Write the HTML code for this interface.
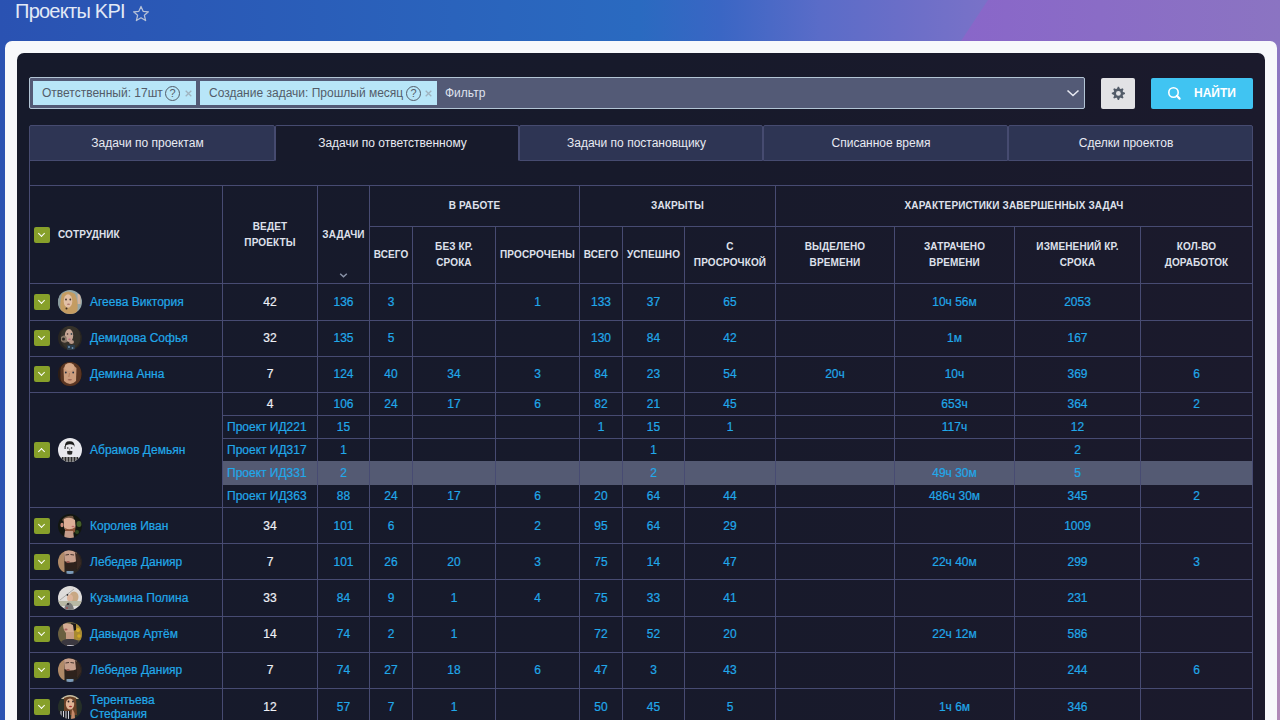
<!DOCTYPE html>
<html><head><meta charset="utf-8">
<style>
*{box-sizing:border-box;margin:0;padding:0}
html,body{width:1280px;height:720px;overflow:hidden}
body{font-family:"Liberation Sans",sans-serif;position:relative;
background:linear-gradient(90deg,#2a52b2 0px,#2a6ac0 640px,#3a66c4 720px,#5a6cc8 820px,#6a6ec8 900px,#7a72c8 990px)}
.purp{position:absolute;left:0;top:0;width:1280px;height:720px;clip-path:polygon(988px 0,1280px 0,1280px 720px,514px 720px);background:linear-gradient(90deg,#8966c9 960px,#8a6cc6 1100px,#8b74c2 1280px)}
.rstrip{position:absolute;left:1270px;top:41px;width:10px;height:679px;background:linear-gradient(180deg,#8b76c2 0,#a184bc 300px,#b08ab8 679px)}
.title{position:absolute;left:15px;top:-1px;font-size:20px;color:#e2e9f6;letter-spacing:-0.75px;line-height:24px}
.star{position:absolute;left:132px;top:5px}
.white{position:absolute;left:5px;top:41px;width:1272px;height:720px;background:#f7f8fb;border-radius:7px}
.dark{position:absolute;left:17px;top:53px;width:1248px;height:700px;background:linear-gradient(90deg,#161a2b 0,#171a2b 600px,#1b1a2c 1248px);border-radius:7px}
.filter{position:absolute;left:29px;top:77px;width:1056px;height:32px;background:#535a76;border:1px solid #b3c5d5;border-radius:2px}
.chip{position:absolute;top:3px;height:24px;background:#b8e6f8;color:#535c69;font-size:12px;line-height:24px;white-space:nowrap}
.chip .t{position:absolute;top:0}
.help{position:absolute;top:5px;width:15px;height:15px;border:1px solid #535c69;border-radius:50%;font-size:11px;line-height:13px;text-align:center;color:#535c69}
.x{position:absolute;top:0;font-size:12px;color:#9aa2ad}
.ph{position:absolute;left:415px;top:0;line-height:30px;font-size:12px;color:#dfe2ee}
.chev{position:absolute;left:1036px;top:8px}
.gear{position:absolute;left:1101px;top:78px;width:34px;height:31px;background:#e2e2e5;border-radius:2px}
.find{position:absolute;left:1151px;top:78px;width:102px;height:31px;background:#40c4f2;border-radius:2px;color:#fff;font-weight:bold;font-size:12px;line-height:31px}
.tabs{position:absolute;left:29px;top:125px;width:1224px;height:36px}
.tab{position:absolute;top:0;height:36px;background:#2e3554;border:1px solid #464b70;border-radius:2px 2px 0 0;color:#e8eaf2;font-size:12px;text-align:center;line-height:34px;padding-right:9px}
.tab.act{background:#171a2b;border-bottom-color:#171a2b}
.hl{position:absolute;height:1px}
.vl{position:absolute;width:1px}
.n,.h,.nm{position:absolute;display:flex;align-items:center;justify-content:center;white-space:nowrap}
.n{font-size:12px;-webkit-text-stroke:0.2px currentColor}
.h{font-size:10px;font-weight:bold;color:#dfe1eb;text-align:center;line-height:16px;letter-spacing:0.12px}
.nm{font-size:12px;color:#21a8e9;line-height:14px;-webkit-text-stroke:0.2px currentColor}
.cbx{position:absolute;width:16px;height:16px;background:#87a02a;border-radius:2px}
.cbx:after{content:"";position:absolute;left:5px;top:4px;width:4px;height:4px;border-right:1.5px solid #fff;border-bottom:1.5px solid #fff;transform:rotate(45deg)}
.cbx.up:after{top:7px;transform:rotate(-135deg)}
.av{position:absolute}
</style></head><body>
<svg width="0" height="0" style="position:absolute">
<defs>
<clipPath id="cc"><circle cx="12" cy="12" r="12"/></clipPath>
<filter id="bl" x="-10%" y="-10%" width="120%" height="120%"><feGaussianBlur stdDeviation="0.55"/></filter>
<symbol id="av1" viewBox="0 0 24 24"><g clip-path="url(#cc)"><rect width="24" height="24" fill="#95a6a6"/><g filter="url(#bl)"><rect x="0" y="0" width="6" height="24" fill="#8a9c9e"/><rect x="19.5" y="4" width="3" height="10" fill="#d6b6a0"/><path d="M4 4 Q10 -1 17 4 Q21 12 19 24 L3 24 Q1 14 4 4Z" fill="#c49c62"/><ellipse cx="10" cy="11" rx="4.3" ry="6.8" fill="#e2c0a6"/><circle cx="8" cy="9.5" r="0.9" fill="#403028"/><circle cx="12.3" cy="9.5" r="0.9" fill="#403028"/><ellipse cx="10.5" cy="14.3" rx="1.6" ry="0.7" fill="#b07870"/><circle cx="8.5" cy="18.5" r="1" fill="#3a2a20"/></g></g></symbol>
<symbol id="av2" viewBox="0 0 24 24"><g clip-path="url(#cc)"><rect width="24" height="24" fill="#272522"/><g filter="url(#bl)"><ellipse cx="12.5" cy="11" rx="10" ry="12" fill="#35302b"/><ellipse cx="11" cy="9.5" rx="4.2" ry="6.5" fill="#c6a694"/><path d="M3 11 Q6 8 8.5 11 L9 16 Q6 18 3 15Z" fill="#8a7a6a"/><circle cx="5.5" cy="13" r="1.5" fill="#2a2622"/><ellipse cx="13.5" cy="16" rx="2.5" ry="2" fill="#b89888"/><circle cx="9.5" cy="8" r="0.8" fill="#3a2a2a"/><circle cx="13.5" cy="8" r="0.9" fill="#3a4a50"/><ellipse cx="11.5" cy="13.2" rx="1.4" ry="0.8" fill="#c06a80"/><rect x="9" y="19" width="8" height="5" fill="#2c3a4a"/><circle cx="11" cy="21" r="1" fill="#6a90b0"/><circle cx="14.5" cy="22" r="0.9" fill="#6a90b0"/></g></g></symbol>
<symbol id="av3" viewBox="0 0 24 24"><g clip-path="url(#cc)"><rect width="24" height="24" fill="#2a1a12"/><g filter="url(#bl)"><ellipse cx="12.5" cy="12" rx="11" ry="13" fill="#5a3622"/><path d="M5.5 6 Q12 -1 18.5 6 L18 19 Q12 25 6 19Z" fill="#cc9c7c"/><ellipse cx="11.5" cy="5" rx="5" ry="4" fill="#d6a888"/><circle cx="7.8" cy="10.5" r="0.9" fill="#2a3040"/><circle cx="15.2" cy="10.5" r="0.9" fill="#2a3040"/><path d="M11.5 11 L10.8 15" stroke="#a87050" stroke-width="0.7"/><ellipse cx="11.8" cy="17.8" rx="2.2" ry="0.8" fill="#9a6050"/><rect x="0" y="0" width="2.5" height="24" fill="#2a1a12"/></g></g></symbol>
<symbol id="av4" viewBox="0 0 24 24"><g clip-path="url(#cc)"><rect width="24" height="24" fill="#e9e9ee"/><g filter="url(#bl)"><path d="M7 9 Q6.5 3 11.5 3.3 Q17 3 16.5 9 L15.5 7 Q12 5.5 8.5 7Z" fill="#1e1e1e"/><rect x="6.5" y="8" width="1.2" height="3" fill="#333"/><circle cx="9.8" cy="10" r="0.8" fill="#222"/><circle cx="13.6" cy="10" r="0.8" fill="#222"/><path d="M11.6 10.5 L11.3 12.5" stroke="#555" stroke-width="0.6"/><path d="M9 13.2 Q12 12.3 14.5 13.2 L14 16.3 Q12 17.2 9.5 16.3Z" fill="#2a2a2a"/><path d="M2 24 L4 19 L20 19 L22 24Z" fill="#2a2a2a"/><path d="M6 19v5M9 19v5M12 19v5M15 19v5M18 19v5" stroke="#e0e0e0" stroke-width="0.9"/></g></g></symbol>
<symbol id="av5" viewBox="0 0 24 24"><g clip-path="url(#cc)"><rect width="24" height="24" fill="#121610"/><g filter="url(#bl)"><ellipse cx="21" cy="10" rx="2.5" ry="3" fill="#44602a"/><ellipse cx="19" cy="18" rx="2" ry="2" fill="#304820"/><path d="M4 6 Q8 1 15 2 L16 5 Q10 4 6 8Z" fill="#6e5442"/><path d="M6 5 Q12 2 17 6 L17.5 12 Q17 17 13 18 L8 17 Q5 14 6 5Z" fill="#dcae96"/><ellipse cx="4" cy="11" rx="1.6" ry="2.2" fill="#c88c7c"/><path d="M7 14 Q12 17 17.5 13 L17 18 Q12 21 7.5 17Z" fill="#8c5238"/><path d="M7 17 L15 17 L16 24 L6 24Z" fill="#c49c8a"/><ellipse cx="15" cy="12.5" rx="1.5" ry="0.8" fill="#c07070"/></g></g></symbol>
<symbol id="av6" viewBox="0 0 24 24"><g clip-path="url(#cc)"><rect width="24" height="24" fill="#2a2420"/><g filter="url(#bl)"><rect x="0" y="2" width="6.5" height="20" fill="#b08a68"/><path d="M6 1 Q13 -1 19 3 L19 14 Q13 17 7 14Z" fill="#c8a08c"/><path d="M17 2 Q23 6 23 14 L19 20 Z" fill="#3a2c24"/><path d="M6.5 11 Q12 14 19 11 L19 18 Q13 22 7 18Z" fill="#2e221c"/><ellipse cx="10" cy="12" rx="1.8" ry="1" fill="#9a5a50"/><path d="M7.5 5 L11 4.5 M12.5 4.5 L16 5" stroke="#3a2a24" stroke-width="0.9"/><rect x="8.5" y="21" width="7" height="3" fill="#7a9ab8"/></g></g></symbol>
<symbol id="av7" viewBox="0 0 24 24"><g clip-path="url(#cc)"><rect width="24" height="24" fill="#dedcda"/><g filter="url(#bl)"><path d="M2 14 L16 3" stroke="#8a8884" stroke-width="0.6"/><circle cx="9.5" cy="9" r="0.9" fill="#222"/><ellipse cx="16" cy="11" rx="4.5" ry="5.5" fill="#c8a884"/><ellipse cx="12" cy="12" rx="3" ry="3.5" fill="#dcb49a"/><rect x="0" y="15" width="24" height="5" fill="#b8b8a4"/><path d="M6 24 Q7 17 11 16.5 Q15 17 16 24Z" fill="#7a7a7a"/><circle cx="10" cy="18" r="1" fill="#222"/><circle cx="9" cy="22" r="1" fill="#a05050"/></g></g></symbol>
<symbol id="av8" viewBox="0 0 24 24"><g clip-path="url(#cc)"><rect width="24" height="24" fill="#6a6040"/><g filter="url(#bl)"><rect x="16" y="2" width="8" height="16" fill="#a88a30"/><circle cx="20" cy="8" r="2" fill="#d8b030"/><circle cx="21" cy="14" r="1.8" fill="#d0a828"/><path d="M13 1 L18 2 L18 8 L15 9Z" fill="#1a1818"/><path d="M5 2 Q10 0 15 3 L16 10 Q13 13 8 11 Q5 8 5 2Z" fill="#d4ac94"/><rect x="8" y="10" width="8" height="7" fill="#c49a82"/><ellipse cx="8" cy="7.5" rx="1.6" ry="0.9" fill="#a86060"/><path d="M1 24 Q3 16 12 17 Q21 16 23 24Z" fill="#3a3840"/><rect x="9" y="23" width="7" height="1" fill="#c8c8d8"/></g></g></symbol>
<symbol id="av9" viewBox="0 0 24 24"><g clip-path="url(#cc)"><rect width="24" height="24" fill="#263028"/><g filter="url(#bl)"><rect x="3" y="0" width="18" height="4" fill="#c8bca0"/><path d="M6 3 Q12 0 18 3 L19 20 L6 20Z" fill="#6a4228"/><ellipse cx="12" cy="9" rx="4.2" ry="5.5" fill="#e0b494"/><circle cx="10.5" cy="6.5" r="0.9" fill="#2a2020"/><circle cx="15" cy="6.5" r="0.9" fill="#2a2020"/><ellipse cx="12.5" cy="11.5" rx="1.5" ry="0.7" fill="#a83030"/><rect x="1" y="16" width="11" height="8" fill="#1e1e24"/><path d="M3 16v8M5.5 16v8M8 16v8M10.5 16v8" stroke="#d8d8e0" stroke-width="1"/><path d="M14 14 Q17 16 17 24 L13 24Z" fill="#c48a6a"/></g></g></symbol>
</defs></svg>
<div class="purp"></div>
<div class="rstrip"></div>
<div class="title">Проекты KPI</div>
<svg class="star" width="18" height="17" viewBox="0 0 16 15"><path d="M8 1.2 L9.9 5.6 L14.6 6 L11 9.1 L12.1 13.8 L8 11.3 L3.9 13.8 L5 9.1 L1.4 6 L6.1 5.6 Z" fill="none" stroke="#b7c2d8" stroke-width="1.1" stroke-linejoin="round"/></svg>
<div class="white"></div>
<div class="dark"></div>
<div class="filter">
  <div class="chip" style="left:3px;width:163px"><span class="t" style="left:9px">Ответственный: 17шт</span><span class="help" style="left:132px">?</span><svg class="x" style="left:152px;top:9px" width="7" height="7" viewBox="0 0 7 7"><path d="M0.7 0.7L6.3 6.3M6.3 0.7L0.7 6.3" stroke="#9fb3bf" stroke-width="1.3"/></svg></div>
  <div class="chip" style="left:170px;width:237px"><span class="t" style="left:9px">Создание задачи: Прошлый месяц</span><span class="help" style="left:206px">?</span><svg class="x" style="left:225px;top:9px" width="7" height="7" viewBox="0 0 7 7"><path d="M0.7 0.7L6.3 6.3M6.3 0.7L0.7 6.3" stroke="#9fb3bf" stroke-width="1.3"/></svg></div>
  <div class="ph">Фильтр</div>
  <svg class="chev" width="14" height="14" viewBox="0 0 14 14"><path d="M1.5 4.5 L7 9.5 L12.5 4.5" fill="none" stroke="#e8eaf2" stroke-width="1.6"/></svg>
</div>
<div class="gear"><svg style="position:absolute;left:10px;top:8px" width="15" height="15" viewBox="0 0 15 15"><g transform="translate(7.4 7.4)" fill="#535c69"><circle r="4.8"/><path d="M-1.6 -4.2 L-0.6 -6.6 L0.6 -6.6 L1.6 -4.2Z" transform="rotate(0)"/><path d="M-1.6 -4.2 L-0.6 -6.6 L0.6 -6.6 L1.6 -4.2Z" transform="rotate(45)"/><path d="M-1.6 -4.2 L-0.6 -6.6 L0.6 -6.6 L1.6 -4.2Z" transform="rotate(90)"/><path d="M-1.6 -4.2 L-0.6 -6.6 L0.6 -6.6 L1.6 -4.2Z" transform="rotate(135)"/><path d="M-1.6 -4.2 L-0.6 -6.6 L0.6 -6.6 L1.6 -4.2Z" transform="rotate(180)"/><path d="M-1.6 -4.2 L-0.6 -6.6 L0.6 -6.6 L1.6 -4.2Z" transform="rotate(225)"/><path d="M-1.6 -4.2 L-0.6 -6.6 L0.6 -6.6 L1.6 -4.2Z" transform="rotate(270)"/><path d="M-1.6 -4.2 L-0.6 -6.6 L0.6 -6.6 L1.6 -4.2Z" transform="rotate(315)"/><circle r="2.4" fill="#e2e2e5"/></g></svg></div>
<div class="find"><svg style="position:absolute;left:15px;top:7px" width="16" height="16" viewBox="0 0 16 16"><circle cx="7.5" cy="7.5" r="4.7" fill="none" stroke="#fff" stroke-width="1.6"/><path d="M10.8 10.8 L13.6 13.6" stroke="#fff" stroke-width="2.2" stroke-linecap="round"/></svg><span style="position:absolute;left:43px;top:0">НАЙТИ</span></div>
<div class="tabs">
  <div class="tab" style="left:0;width:246px">Задачи по проектам</div>
  <div class="tab act" style="left:246px;width:244px">Задачи по ответственному</div>
  <div class="tab" style="left:490px;width:244px">Задачи по постановщику</div>
  <div class="tab" style="left:734px;width:245px">Списанное время</div>
  <div class="tab" style="left:979px;width:245px">Сделки проектов</div>
</div>
<div style="position:absolute;left:223px;top:461px;width:1029px;height:24px;background:#545a73"></div>
<div class="vl" style="left:29px;top:160px;height:561px;background:#474b72"></div>
<div class="vl" style="left:1252px;top:160px;height:561px;background:#474b72"></div>
<div class="hl" style="top:185px;left:29px;width:1224px;background:#474b72"></div>
<div class="hl" style="top:226px;left:369px;width:884px;background:#474b72"></div>
<div class="hl" style="top:283px;left:29px;width:1224px;background:#474b72"></div>
<div class="hl" style="top:320px;left:29px;width:1224px;background:#474b72"></div>
<div class="hl" style="top:356px;left:29px;width:1224px;background:#474b72"></div>
<div class="hl" style="top:392px;left:29px;width:1224px;background:#474b72"></div>
<div class="hl" style="top:507px;left:29px;width:1224px;background:#474b72"></div>
<div class="hl" style="top:543px;left:29px;width:1224px;background:#474b72"></div>
<div class="hl" style="top:579px;left:29px;width:1224px;background:#474b72"></div>
<div class="hl" style="top:616px;left:29px;width:1224px;background:#474b72"></div>
<div class="hl" style="top:652px;left:29px;width:1224px;background:#474b72"></div>
<div class="hl" style="top:688px;left:29px;width:1224px;background:#474b72"></div>
<div class="hl" style="top:415px;left:222px;width:1031px;background:#474b72"></div>
<div class="hl" style="top:438px;left:222px;width:1031px;background:#474b72"></div>
<div class="vl" style="left:222px;top:185px;height:536px;background:#474b72"></div>
<div class="vl" style="left:317px;top:185px;height:536px;background:#474b72"></div>
<div class="vl" style="left:369px;top:185px;height:536px;background:#474b72"></div>
<div class="vl" style="left:412px;top:226px;height:495px;background:#474b72"></div>
<div class="vl" style="left:495px;top:226px;height:495px;background:#474b72"></div>
<div class="vl" style="left:579px;top:185px;height:536px;background:#474b72"></div>
<div class="vl" style="left:622px;top:226px;height:495px;background:#474b72"></div>
<div class="vl" style="left:684px;top:226px;height:495px;background:#474b72"></div>
<div class="vl" style="left:775px;top:185px;height:536px;background:#474b72"></div>
<div class="vl" style="left:894px;top:226px;height:495px;background:#474b72"></div>
<div class="vl" style="left:1014px;top:226px;height:495px;background:#474b72"></div>
<div class="vl" style="left:1140px;top:226px;height:495px;background:#474b72"></div>
<div class="cbx" style="left:34px;top:227px"></div>
<div class="h" style="left:58px;top:186px;width:150px;height:97px;justify-content:flex-start"><span>СОТРУДНИК</span></div>
<div class="h" style="left:223px;top:186px;width:94px;height:97px;"><span>ВЕДЕТ<br>ПРОЕКТЫ</span></div>
<div class="h" style="left:318px;top:186px;width:51px;height:97px;"><span>ЗАДАЧИ</span></div>
<svg style="position:absolute;left:339px;top:272px" width="9" height="6" viewBox="0 0 9 6"><path d="M1.2 1.8 L4.5 4.8 L7.8 1.8" fill="none" stroke="#8a93a8" stroke-width="1.5"/></svg>
<div class="h" style="left:370px;top:186px;width:209px;height:40px;"><span>В РАБОТЕ</span></div>
<div class="h" style="left:580px;top:186px;width:195px;height:40px;"><span>ЗАКРЫТЫ</span></div>
<div class="h" style="left:776px;top:186px;width:476px;height:40px;"><span>ХАРАКТЕРИСТИКИ ЗАВЕРШЕННЫХ ЗАДАЧ</span></div>
<div class="h" style="left:370px;top:227px;width:42px;height:56px;"><span>ВСЕГО</span></div>
<div class="h" style="left:413px;top:227px;width:82px;height:56px;"><span>БЕЗ КР.<br>СРОКА</span></div>
<div class="h" style="left:496px;top:227px;width:83px;height:56px;"><span>ПРОСРОЧЕНЫ</span></div>
<div class="h" style="left:580px;top:227px;width:42px;height:56px;"><span>ВСЕГО</span></div>
<div class="h" style="left:623px;top:227px;width:61px;height:56px;"><span>УСПЕШНО</span></div>
<div class="h" style="left:685px;top:227px;width:90px;height:56px;"><span>С<br>ПРОСРОЧКОЙ</span></div>
<div class="h" style="left:776px;top:227px;width:118px;height:56px;"><span>ВЫДЕЛЕНО<br>ВРЕМЕНИ</span></div>
<div class="h" style="left:895px;top:227px;width:119px;height:56px;"><span>ЗАТРАЧЕНО<br>ВРЕМЕНИ</span></div>
<div class="h" style="left:1015px;top:227px;width:125px;height:56px;"><span>ИЗМЕНЕНИЙ КР.<br>СРОКА</span></div>
<div class="h" style="left:1141px;top:227px;width:111px;height:56px;"><span>КОЛ-ВО<br>ДОРАБОТОК</span></div>
<div class="cbx" style="left:34px;top:294px"></div>
<svg class="av" style="left:58px;top:290px" width="24" height="24" viewBox="0 0 24 24"><use href="#av1"/></svg>
<div class="nm" style="left:90px;top:284px;height:36px"><span>Агеева Виктория</span></div>
<div class="n" style="left:223px;top:284px;width:94px;height:36px;color:#eef0f6;justify-content:center;"><span>42</span></div>
<div class="n" style="left:318px;top:284px;width:51px;height:36px;color:#21a8e9;justify-content:center;"><span>136</span></div>
<div class="n" style="left:370px;top:284px;width:42px;height:36px;color:#21a8e9;justify-content:center;"><span>3</span></div>
<div class="n" style="left:496px;top:284px;width:83px;height:36px;color:#21a8e9;justify-content:center;"><span>1</span></div>
<div class="n" style="left:580px;top:284px;width:42px;height:36px;color:#21a8e9;justify-content:center;"><span>133</span></div>
<div class="n" style="left:623px;top:284px;width:61px;height:36px;color:#21a8e9;justify-content:center;"><span>37</span></div>
<div class="n" style="left:685px;top:284px;width:90px;height:36px;color:#21a8e9;justify-content:center;"><span>65</span></div>
<div class="n" style="left:895px;top:284px;width:119px;height:36px;color:#21a8e9;justify-content:center;"><span>10ч 56м</span></div>
<div class="n" style="left:1015px;top:284px;width:125px;height:36px;color:#21a8e9;justify-content:center;"><span>2053</span></div>
<div class="cbx" style="left:34px;top:330px"></div>
<svg class="av" style="left:58px;top:326px" width="24" height="24" viewBox="0 0 24 24"><use href="#av2"/></svg>
<div class="nm" style="left:90px;top:320px;height:36px"><span>Демидова Софья</span></div>
<div class="n" style="left:223px;top:320px;width:94px;height:36px;color:#eef0f6;justify-content:center;"><span>32</span></div>
<div class="n" style="left:318px;top:320px;width:51px;height:36px;color:#21a8e9;justify-content:center;"><span>135</span></div>
<div class="n" style="left:370px;top:320px;width:42px;height:36px;color:#21a8e9;justify-content:center;"><span>5</span></div>
<div class="n" style="left:580px;top:320px;width:42px;height:36px;color:#21a8e9;justify-content:center;"><span>130</span></div>
<div class="n" style="left:623px;top:320px;width:61px;height:36px;color:#21a8e9;justify-content:center;"><span>84</span></div>
<div class="n" style="left:685px;top:320px;width:90px;height:36px;color:#21a8e9;justify-content:center;"><span>42</span></div>
<div class="n" style="left:895px;top:320px;width:119px;height:36px;color:#21a8e9;justify-content:center;"><span>1м</span></div>
<div class="n" style="left:1015px;top:320px;width:125px;height:36px;color:#21a8e9;justify-content:center;"><span>167</span></div>
<div class="cbx" style="left:34px;top:366px"></div>
<svg class="av" style="left:58px;top:362px" width="24" height="24" viewBox="0 0 24 24"><use href="#av3"/></svg>
<div class="nm" style="left:90px;top:356px;height:36px"><span>Демина Анна</span></div>
<div class="n" style="left:223px;top:356px;width:94px;height:36px;color:#eef0f6;justify-content:center;"><span>7</span></div>
<div class="n" style="left:318px;top:356px;width:51px;height:36px;color:#21a8e9;justify-content:center;"><span>124</span></div>
<div class="n" style="left:370px;top:356px;width:42px;height:36px;color:#21a8e9;justify-content:center;"><span>40</span></div>
<div class="n" style="left:413px;top:356px;width:82px;height:36px;color:#21a8e9;justify-content:center;"><span>34</span></div>
<div class="n" style="left:496px;top:356px;width:83px;height:36px;color:#21a8e9;justify-content:center;"><span>3</span></div>
<div class="n" style="left:580px;top:356px;width:42px;height:36px;color:#21a8e9;justify-content:center;"><span>84</span></div>
<div class="n" style="left:623px;top:356px;width:61px;height:36px;color:#21a8e9;justify-content:center;"><span>23</span></div>
<div class="n" style="left:685px;top:356px;width:90px;height:36px;color:#21a8e9;justify-content:center;"><span>54</span></div>
<div class="n" style="left:776px;top:356px;width:118px;height:36px;color:#21a8e9;justify-content:center;"><span>20ч</span></div>
<div class="n" style="left:895px;top:356px;width:119px;height:36px;color:#21a8e9;justify-content:center;"><span>10ч</span></div>
<div class="n" style="left:1015px;top:356px;width:125px;height:36px;color:#21a8e9;justify-content:center;"><span>369</span></div>
<div class="n" style="left:1141px;top:356px;width:111px;height:36px;color:#21a8e9;justify-content:center;"><span>6</span></div>
<div class="cbx up" style="left:34px;top:442px"></div>
<svg class="av" style="left:58px;top:438px" width="24" height="24" viewBox="0 0 24 24"><use href="#av4"/></svg>
<div class="nm" style="left:90px;top:432px;height:36px"><span>Абрамов Демьян</span></div>
<div class="n" style="left:223px;top:393px;width:94px;height:22px;color:#eef0f6;justify-content:center;"><span>4</span></div>
<div class="n" style="left:318px;top:393px;width:51px;height:22px;color:#21a8e9;justify-content:center;"><span>106</span></div>
<div class="n" style="left:370px;top:393px;width:42px;height:22px;color:#21a8e9;justify-content:center;"><span>24</span></div>
<div class="n" style="left:413px;top:393px;width:82px;height:22px;color:#21a8e9;justify-content:center;"><span>17</span></div>
<div class="n" style="left:496px;top:393px;width:83px;height:22px;color:#21a8e9;justify-content:center;"><span>6</span></div>
<div class="n" style="left:580px;top:393px;width:42px;height:22px;color:#21a8e9;justify-content:center;"><span>82</span></div>
<div class="n" style="left:623px;top:393px;width:61px;height:22px;color:#21a8e9;justify-content:center;"><span>21</span></div>
<div class="n" style="left:685px;top:393px;width:90px;height:22px;color:#21a8e9;justify-content:center;"><span>45</span></div>
<div class="n" style="left:895px;top:393px;width:119px;height:22px;color:#21a8e9;justify-content:center;"><span>653ч</span></div>
<div class="n" style="left:1015px;top:393px;width:125px;height:22px;color:#21a8e9;justify-content:center;"><span>364</span></div>
<div class="n" style="left:1141px;top:393px;width:111px;height:22px;color:#21a8e9;justify-content:center;"><span>2</span></div>
<div class="n" style="left:227px;top:416px;width:90px;height:22px;color:#21a8e9;justify-content:flex-start;"><span>Проект ИД221</span></div>
<div class="n" style="left:318px;top:416px;width:51px;height:22px;color:#21a8e9;justify-content:center;"><span>15</span></div>
<div class="n" style="left:580px;top:416px;width:42px;height:22px;color:#21a8e9;justify-content:center;"><span>1</span></div>
<div class="n" style="left:623px;top:416px;width:61px;height:22px;color:#21a8e9;justify-content:center;"><span>15</span></div>
<div class="n" style="left:685px;top:416px;width:90px;height:22px;color:#21a8e9;justify-content:center;"><span>1</span></div>
<div class="n" style="left:895px;top:416px;width:119px;height:22px;color:#21a8e9;justify-content:center;"><span>117ч</span></div>
<div class="n" style="left:1015px;top:416px;width:125px;height:22px;color:#21a8e9;justify-content:center;"><span>12</span></div>
<div class="n" style="left:227px;top:439px;width:90px;height:22px;color:#21a8e9;justify-content:flex-start;"><span>Проект ИД317</span></div>
<div class="n" style="left:318px;top:439px;width:51px;height:22px;color:#21a8e9;justify-content:center;"><span>1</span></div>
<div class="n" style="left:623px;top:439px;width:61px;height:22px;color:#21a8e9;justify-content:center;"><span>1</span></div>
<div class="n" style="left:1015px;top:439px;width:125px;height:22px;color:#21a8e9;justify-content:center;"><span>2</span></div>
<div class="n" style="left:227px;top:462px;width:90px;height:22px;color:#21a8e9;justify-content:flex-start;"><span>Проект ИД331</span></div>
<div class="n" style="left:318px;top:462px;width:51px;height:22px;color:#21a8e9;justify-content:center;"><span>2</span></div>
<div class="n" style="left:623px;top:462px;width:61px;height:22px;color:#21a8e9;justify-content:center;"><span>2</span></div>
<div class="n" style="left:895px;top:462px;width:119px;height:22px;color:#21a8e9;justify-content:center;"><span>49ч 30м</span></div>
<div class="n" style="left:1015px;top:462px;width:125px;height:22px;color:#21a8e9;justify-content:center;"><span>5</span></div>
<div class="n" style="left:227px;top:485px;width:90px;height:22px;color:#21a8e9;justify-content:flex-start;"><span>Проект ИД363</span></div>
<div class="n" style="left:318px;top:485px;width:51px;height:22px;color:#21a8e9;justify-content:center;"><span>88</span></div>
<div class="n" style="left:370px;top:485px;width:42px;height:22px;color:#21a8e9;justify-content:center;"><span>24</span></div>
<div class="n" style="left:413px;top:485px;width:82px;height:22px;color:#21a8e9;justify-content:center;"><span>17</span></div>
<div class="n" style="left:496px;top:485px;width:83px;height:22px;color:#21a8e9;justify-content:center;"><span>6</span></div>
<div class="n" style="left:580px;top:485px;width:42px;height:22px;color:#21a8e9;justify-content:center;"><span>20</span></div>
<div class="n" style="left:623px;top:485px;width:61px;height:22px;color:#21a8e9;justify-content:center;"><span>64</span></div>
<div class="n" style="left:685px;top:485px;width:90px;height:22px;color:#21a8e9;justify-content:center;"><span>44</span></div>
<div class="n" style="left:895px;top:485px;width:119px;height:22px;color:#21a8e9;justify-content:center;"><span>486ч 30м</span></div>
<div class="n" style="left:1015px;top:485px;width:125px;height:22px;color:#21a8e9;justify-content:center;"><span>345</span></div>
<div class="n" style="left:1141px;top:485px;width:111px;height:22px;color:#21a8e9;justify-content:center;"><span>2</span></div>
<div class="cbx" style="left:34px;top:518px"></div>
<svg class="av" style="left:58px;top:514px" width="24" height="24" viewBox="0 0 24 24"><use href="#av5"/></svg>
<div class="nm" style="left:90px;top:508px;height:36px"><span>Королев Иван</span></div>
<div class="n" style="left:223px;top:508px;width:94px;height:36px;color:#eef0f6;justify-content:center;"><span>34</span></div>
<div class="n" style="left:318px;top:508px;width:51px;height:36px;color:#21a8e9;justify-content:center;"><span>101</span></div>
<div class="n" style="left:370px;top:508px;width:42px;height:36px;color:#21a8e9;justify-content:center;"><span>6</span></div>
<div class="n" style="left:496px;top:508px;width:83px;height:36px;color:#21a8e9;justify-content:center;"><span>2</span></div>
<div class="n" style="left:580px;top:508px;width:42px;height:36px;color:#21a8e9;justify-content:center;"><span>95</span></div>
<div class="n" style="left:623px;top:508px;width:61px;height:36px;color:#21a8e9;justify-content:center;"><span>64</span></div>
<div class="n" style="left:685px;top:508px;width:90px;height:36px;color:#21a8e9;justify-content:center;"><span>29</span></div>
<div class="n" style="left:1015px;top:508px;width:125px;height:36px;color:#21a8e9;justify-content:center;"><span>1009</span></div>
<div class="cbx" style="left:34px;top:554px"></div>
<svg class="av" style="left:58px;top:550px" width="24" height="24" viewBox="0 0 24 24"><use href="#av6"/></svg>
<div class="nm" style="left:90px;top:544px;height:36px"><span>Лебедев Данияр</span></div>
<div class="n" style="left:223px;top:544px;width:94px;height:36px;color:#eef0f6;justify-content:center;"><span>7</span></div>
<div class="n" style="left:318px;top:544px;width:51px;height:36px;color:#21a8e9;justify-content:center;"><span>101</span></div>
<div class="n" style="left:370px;top:544px;width:42px;height:36px;color:#21a8e9;justify-content:center;"><span>26</span></div>
<div class="n" style="left:413px;top:544px;width:82px;height:36px;color:#21a8e9;justify-content:center;"><span>20</span></div>
<div class="n" style="left:496px;top:544px;width:83px;height:36px;color:#21a8e9;justify-content:center;"><span>3</span></div>
<div class="n" style="left:580px;top:544px;width:42px;height:36px;color:#21a8e9;justify-content:center;"><span>75</span></div>
<div class="n" style="left:623px;top:544px;width:61px;height:36px;color:#21a8e9;justify-content:center;"><span>14</span></div>
<div class="n" style="left:685px;top:544px;width:90px;height:36px;color:#21a8e9;justify-content:center;"><span>47</span></div>
<div class="n" style="left:895px;top:544px;width:119px;height:36px;color:#21a8e9;justify-content:center;"><span>22ч 40м</span></div>
<div class="n" style="left:1015px;top:544px;width:125px;height:36px;color:#21a8e9;justify-content:center;"><span>299</span></div>
<div class="n" style="left:1141px;top:544px;width:111px;height:36px;color:#21a8e9;justify-content:center;"><span>3</span></div>
<div class="cbx" style="left:34px;top:590px"></div>
<svg class="av" style="left:58px;top:586px" width="24" height="24" viewBox="0 0 24 24"><use href="#av7"/></svg>
<div class="nm" style="left:90px;top:580px;height:36px"><span>Кузьмина Полина</span></div>
<div class="n" style="left:223px;top:580px;width:94px;height:36px;color:#eef0f6;justify-content:center;"><span>33</span></div>
<div class="n" style="left:318px;top:580px;width:51px;height:36px;color:#21a8e9;justify-content:center;"><span>84</span></div>
<div class="n" style="left:370px;top:580px;width:42px;height:36px;color:#21a8e9;justify-content:center;"><span>9</span></div>
<div class="n" style="left:413px;top:580px;width:82px;height:36px;color:#21a8e9;justify-content:center;"><span>1</span></div>
<div class="n" style="left:496px;top:580px;width:83px;height:36px;color:#21a8e9;justify-content:center;"><span>4</span></div>
<div class="n" style="left:580px;top:580px;width:42px;height:36px;color:#21a8e9;justify-content:center;"><span>75</span></div>
<div class="n" style="left:623px;top:580px;width:61px;height:36px;color:#21a8e9;justify-content:center;"><span>33</span></div>
<div class="n" style="left:685px;top:580px;width:90px;height:36px;color:#21a8e9;justify-content:center;"><span>41</span></div>
<div class="n" style="left:1015px;top:580px;width:125px;height:36px;color:#21a8e9;justify-content:center;"><span>231</span></div>
<div class="cbx" style="left:34px;top:626px"></div>
<svg class="av" style="left:58px;top:622px" width="24" height="24" viewBox="0 0 24 24"><use href="#av8"/></svg>
<div class="nm" style="left:90px;top:616px;height:36px"><span>Давыдов Артём</span></div>
<div class="n" style="left:223px;top:616px;width:94px;height:36px;color:#eef0f6;justify-content:center;"><span>14</span></div>
<div class="n" style="left:318px;top:616px;width:51px;height:36px;color:#21a8e9;justify-content:center;"><span>74</span></div>
<div class="n" style="left:370px;top:616px;width:42px;height:36px;color:#21a8e9;justify-content:center;"><span>2</span></div>
<div class="n" style="left:413px;top:616px;width:82px;height:36px;color:#21a8e9;justify-content:center;"><span>1</span></div>
<div class="n" style="left:580px;top:616px;width:42px;height:36px;color:#21a8e9;justify-content:center;"><span>72</span></div>
<div class="n" style="left:623px;top:616px;width:61px;height:36px;color:#21a8e9;justify-content:center;"><span>52</span></div>
<div class="n" style="left:685px;top:616px;width:90px;height:36px;color:#21a8e9;justify-content:center;"><span>20</span></div>
<div class="n" style="left:895px;top:616px;width:119px;height:36px;color:#21a8e9;justify-content:center;"><span>22ч 12м</span></div>
<div class="n" style="left:1015px;top:616px;width:125px;height:36px;color:#21a8e9;justify-content:center;"><span>586</span></div>
<div class="cbx" style="left:34px;top:662px"></div>
<svg class="av" style="left:58px;top:658px" width="24" height="24" viewBox="0 0 24 24"><use href="#av6"/></svg>
<div class="nm" style="left:90px;top:652px;height:36px"><span>Лебедев Данияр</span></div>
<div class="n" style="left:223px;top:652px;width:94px;height:36px;color:#eef0f6;justify-content:center;"><span>7</span></div>
<div class="n" style="left:318px;top:652px;width:51px;height:36px;color:#21a8e9;justify-content:center;"><span>74</span></div>
<div class="n" style="left:370px;top:652px;width:42px;height:36px;color:#21a8e9;justify-content:center;"><span>27</span></div>
<div class="n" style="left:413px;top:652px;width:82px;height:36px;color:#21a8e9;justify-content:center;"><span>18</span></div>
<div class="n" style="left:496px;top:652px;width:83px;height:36px;color:#21a8e9;justify-content:center;"><span>6</span></div>
<div class="n" style="left:580px;top:652px;width:42px;height:36px;color:#21a8e9;justify-content:center;"><span>47</span></div>
<div class="n" style="left:623px;top:652px;width:61px;height:36px;color:#21a8e9;justify-content:center;"><span>3</span></div>
<div class="n" style="left:685px;top:652px;width:90px;height:36px;color:#21a8e9;justify-content:center;"><span>43</span></div>
<div class="n" style="left:1015px;top:652px;width:125px;height:36px;color:#21a8e9;justify-content:center;"><span>244</span></div>
<div class="n" style="left:1141px;top:652px;width:111px;height:36px;color:#21a8e9;justify-content:center;"><span>6</span></div>
<div class="cbx" style="left:34px;top:699px"></div>
<svg class="av" style="left:58px;top:695px" width="24" height="24" viewBox="0 0 24 24"><use href="#av9"/></svg>
<div class="nm" style="left:90px;top:689px;height:36px"><span>Терентьева<br>Стефания</span></div>
<div class="n" style="left:223px;top:689px;width:94px;height:36px;color:#eef0f6;justify-content:center;"><span>12</span></div>
<div class="n" style="left:318px;top:689px;width:51px;height:36px;color:#21a8e9;justify-content:center;"><span>57</span></div>
<div class="n" style="left:370px;top:689px;width:42px;height:36px;color:#21a8e9;justify-content:center;"><span>7</span></div>
<div class="n" style="left:413px;top:689px;width:82px;height:36px;color:#21a8e9;justify-content:center;"><span>1</span></div>
<div class="n" style="left:580px;top:689px;width:42px;height:36px;color:#21a8e9;justify-content:center;"><span>50</span></div>
<div class="n" style="left:623px;top:689px;width:61px;height:36px;color:#21a8e9;justify-content:center;"><span>45</span></div>
<div class="n" style="left:685px;top:689px;width:90px;height:36px;color:#21a8e9;justify-content:center;"><span>5</span></div>
<div class="n" style="left:895px;top:689px;width:119px;height:36px;color:#21a8e9;justify-content:center;"><span>1ч 6м</span></div>
<div class="n" style="left:1015px;top:689px;width:125px;height:36px;color:#21a8e9;justify-content:center;"><span>346</span></div>
</body></html>
